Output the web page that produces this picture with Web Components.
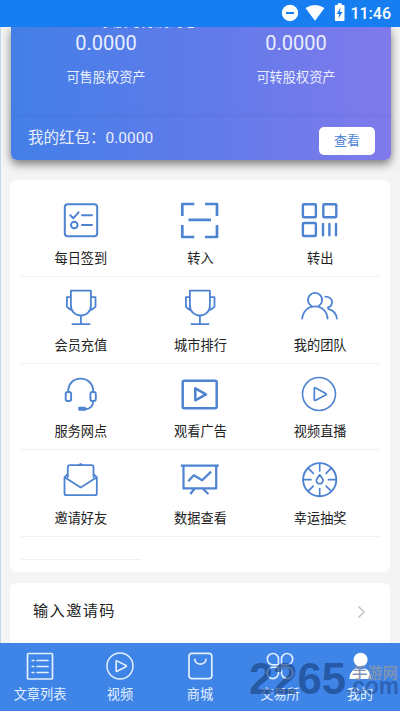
<!DOCTYPE html>
<html lang="zh-CN">
<head>
<meta charset="utf-8">
<title>我的</title>
<style>
html,body{margin:0;height:100%}
body{font-family:Roboto,"Noto Sans CJK SC",sans-serif;background:#f4f4f5;overflow:hidden}
</style>
</head>
<body>
<app-screen></app-screen>
<script>
const define = (name, html, setup) => customElements.define(name, class extends HTMLElement {
  connectedCallback() {
    if (this.shadowRoot) return;
    const t = document.createElement('template');
    t.innerHTML = html;
    const content = t.content.cloneNode(true);
    if (setup) setup(this, content);
    this.attachShadow({mode: 'open'}).append(content);
  }
});

const ICONS = {
  check: '<g stroke-width="2"><rect x="3.8" y="4.2" width="32.4" height="32" rx="3"/><path d="M9.3 15.2l3.1 3 5.2-5.8M21 15.2h10M21 25h10"/><circle cx="13.3" cy="25" r="3.3"/></g>',
  scan: '<path stroke-width="2.7" stroke-linecap="butt" d="M2.3 16V4h12M25 4h12v12M37 25v12H25M14.3 37h-12V25M8.5 19.9h22.5"/>',
  qr: '<g stroke-width="2.4"><rect x="2.9" y="4.3" width="13" height="13" rx="1"/><rect x="23.3" y="4.3" width="13" height="13" rx="1"/><rect x="2.9" y="23" width="13" height="13" rx="1"/><path d="M23 24v11.3M29.4 24v11.3M36 24v11.3"/></g>',
  cup: '<path stroke-width="1.8" d="M9.9 3.7h20v14.8c0 5.8-4.2 10-10 10s-10-4.2-10-10zM19.9 28.5v8.7M11.5 37.2h17M9.5 10.2H5.9v9.5l3.6 3M30.3 10.2h4.2v9.5l-4 3"/>',
  team: '<path stroke-width="1.8" d="M11.3 19.1A7.1 7.1 0 1 1 18.8 19.1M2.2 31.6c.6-7 5.8-12.2 12.7-12.2s12.3 5.2 12.7 12.2M25.3 9.7c4 0 6.7 2.4 6.7 5.6 0 2.6-1.6 4.5-4.2 5.3M28.3 21.8c5 1.3 8 5 8.6 9.8"/>',
  headset: '<g stroke-width="1.9"><path d="M7.3 18v-1.2c0-7.2 5.3-12.2 12.3-12.2s12.6 5 12.6 12.2V18M32.2 27c0 5-3.2 8.1-8 8.3"/><rect x="4.7" y="18" width="5.4" height="9" rx="2"/><rect x="29.4" y="18" width="5.4" height="9" rx="2"/></g><rect x="17.3" y="32.8" width="7.5" height="4" rx=".8" fill="currentColor" stroke="none"/>',
  ad: '<path stroke-width="2.5" d="M4.2 6.7h31a1.5 1.5 0 0 1 1.5 1.5v24.5a1.5 1.5 0 0 1-1.5 1.5h-31a1.5 1.5 0 0 1-1.5-1.5V8.2a1.5 1.5 0 0 1 1.5-1.5zM15.3 14.3v12l10.7-6z"/>',
  live: '<circle cx="19" cy="20" r="16.5" stroke-width="1.6"/><path stroke-width="1.7" d="M14.3 14.6v10.8q0 1.5 1.4.8l10-5.1q1.2-.9 0-1.7l-10-5.5q-1.4-.8-1.4.7z"/>',
  invite: '<g stroke-width="1.8"><path d="M6.8 17V7.2q0-2 2-2h21.7q2 0 2 2V17M17.8 5l1.9-1 1.9 1"/><path d="M6.5 14.5l-3 2.7v16.3q0 1.7 1.7 1.7h28.9q1.7 0 1.7-1.7V17.2l-3-2.7M3.5 17.2l16.2 10.2 16.1-10.2"/></g>',
  chart: '<path stroke-width="2.2" stroke-linecap="butt" d="M.8 5.7h38M3.5 5.7v22.7h32.7V5.7M8.2 21.3l5.6-6 8.4 5 8.9-8.7M14.3 29l-4 5M23.2 29l5.2 5"/>',
  wheel: '<circle cx="19.7" cy="19.7" r="16.6" stroke-width="1.9"/><path stroke-width="1.7" d="M19.7 4v7M19.7 28.5v7M4 19.7h7M28.5 19.7h7M8.7 8.7l4.6 4.6M30.7 8.7l-4.6 4.6M8.7 30.7l4.6-4.6M30.7 30.7l-4.6-4.6M19.7 14.8l-2.3 3.3a3.3 3.3 0 1 0 4.6 0z"/>',
  list: '<g stroke-width="1.7"><rect x="7.5" y="7.5" width="25" height="25.5" rx="1"/><path d="M12.3 14.5h1.5M17 14.5h11M12.3 20.5h1.5M17 20.5h11M12.3 26.5h1.5M17 26.5h11"/></g>',
  play: '<circle cx="20" cy="20" r="13" stroke-width="1.5"/><path stroke-width="1.6" d="M16.2 15.3v9.6q0 .8.8.4l9-4.6q.8-.6 0-1.2l-9-4.6q-.8-.4-.8.4z"/>',
  shop: '<path stroke-width="1.7" d="M12 7.3h16.8q3 0 3 3v19.5q0 2.8-3 2.8H12q-3 0-3-2.8V10.3q0-3 3-3zM14.8 13.3c.3 6.3 10.9 6.3 11.2 0"/>',
  clover: '<path stroke-width="1.6" d="M18.5 18.7h-5.8a5.6 5.6 0 1 1 5.8-5.6zM21.5 18.7h5.8a5.6 5.6 0 1 0-5.8-5.6zM18.5 21.2h-5.8a5.7 5.7 0 1 0 5.8 5.7zM21.5 21.2h5.8a5.7 5.7 0 1 1-5.8 5.7z"/>',
  me: '<g fill="currentColor" stroke="none"><circle cx="20.6" cy="13.7" r="7"/><path d="M9.3 33c.2-6.3 4.3-10.6 7.3-10.6q4 1.6 8 0c3 0 6.3 4.3 6.3 10.6z"/></g>'
};

define('ui-icon', `<style>:host{display:block;width:40px;height:40px;flex:none}svg{display:block;width:100%;height:100%;fill:none;stroke:currentColor;stroke-linecap:round;stroke-linejoin:round}</style><svg viewBox="0 0 40 40"></svg>`,
  (el, root) => { root.querySelector('svg').innerHTML = ICONS[el.getAttribute('name')]; });

define('status-bar', `<style>
:host{display:flex;height:26.5px;flex:none;align-items:center;justify-content:flex-end;background:#167ef0;color:#fff;box-sizing:border-box;padding-right:9px;position:relative;z-index:1}
svg{display:block;width:64px;height:22px}span{font-size:16px;line-height:26px;font-weight:500;padding:2px 0 0 5.5px}
</style><svg viewBox="0 0 64 22"><g fill="currentColor"><circle cx="9" cy="11" r="8.2"/><path d="M24.5 6q9.5-6 19 0L34 18.7z"/><path d="M54.7 3h2V1.2h4V3h2q.8 0 .8.8v14.4q0 .8-.8.8h-8q-.8 0-.8-.8V3.8q0-.8.8-.8z"/></g><path d="M5 11h8" stroke="#167ef0" stroke-width="2"/><path d="M59.7 5.5l-4 6.5h2.5l-.7 4.5 4-6.5H59z" fill="#167ef0"/></svg><span>11:46</span>`);

define('asset-value', `<style>
:host{display:block;width:190px;text-align:center;color:#e9eefd}
b{display:block;font-weight:400;font-size:20px;line-height:26px}p{margin:11.5px 0 0;font-size:13.2px;line-height:20px}
</style><b><slot></slot></b><p><slot name="label"></slot></p>`);

define('asset-card', `<style>
:host{display:block;height:133.5px;flex:none;margin:0 9px 0 11px;background:linear-gradient(90deg,#437fe7,#607bea 50%,#807aeb);border-radius:0 0 6px 6px;box-shadow:0 4px 10px rgba(0,0,0,.5);color:#e9eefd}
.cut{height:3.5px;display:flex;justify-content:center;align-items:flex-end;font-size:14px;line-height:18px;padding-right:105px}
.vals{display:flex;height:85.5px}
.foot{display:flex;height:44.5px;box-sizing:border-box;align-items:center;justify-content:space-between;padding:0 16px 0 17px;border-top:1px solid rgba(60,80,190,.12);box-shadow:0 -2px 4px rgba(50,70,170,.05)}
.foot span{font-size:15.5px;padding-bottom:4px}
button{width:56px;height:28px;margin-top:5px;border:0;padding:0;border-radius:5px;background:#fff;color:#4d83d6;font:13px/28px Roboto,"Noto Sans CJK SC",sans-serif}
</style><div class="cut">求股与分润的总</div><div class="vals"><asset-value>0.0000<span slot="label">可售股权资产</span></asset-value><asset-value>0.0000<span slot="label">可转股权资产</span></asset-value></div><div class="foot"><span>我的红包：0.0000</span><button>查看</button></div>`);

define('menu-item', `<style>
:host{display:flex;flex-direction:column;align-items:center;height:86.75px;box-sizing:border-box;padding-top:10px;border-bottom:1px solid #f1f1f1;font-size:13.2px;color:#222}
ui-icon{color:#4e83d2}span{line-height:20px;margin-top:8.8px;white-space:nowrap}
:host([blank]){height:23px}
</style><ui-icon></ui-icon><span><slot></slot></span>`, (el, root) => {
  if (el.hasAttribute('blank')) { root.querySelector('ui-icon').remove(); return; }
  root.querySelector('ui-icon').setAttribute('name', el.getAttribute('icon'));
});

define('menu-grid', `<style>
:host{display:grid;grid-template-columns:repeat(3,1fr);align-content:start;height:392px;flex:none;box-sizing:border-box;padding:10px 10px 0 11px;margin:20px 10px 0;background:#fff;border-radius:6px}
</style><slot></slot>`);

define('invite-row', `<style>
:host{display:flex;height:59.5px;flex:none;box-sizing:border-box;justify-content:space-between;align-items:center;margin:11px 10px 0;padding:0 24px 7px 23px;background:#fff;border-radius:6px 6px 0 0;font-size:15.2px;letter-spacing:1.4px;color:#222}
svg{width:9px;height:14px;margin-top:5px;fill:none;stroke:#c4c4c4;stroke-width:1.6}
</style><slot></slot><svg viewBox="0 0 9 14"><path d="M1.5 1.5L7 7l-5.5 5.5"/></svg>`);

define('tab-item', `<style>
:host{display:flex;flex-direction:column;align-items:center;width:80px;padding-top:3.5px;font-size:13.2px;color:#e3f0ff}
:host([active]) ui-icon{color:#fff}
span{line-height:20px;margin-top:-1px}
</style><ui-icon></ui-icon><span><slot></slot></span>`, (el, root) => root.querySelector('ui-icon').setAttribute('name', el.getAttribute('icon')));

define('tab-bar', `<style>
:host{display:flex;flex:1;background:#3f84e7;position:relative}
svg{position:absolute;left:245px;top:15px;width:155px;height:45px;pointer-events:none}
</style><slot></slot>
<svg viewBox="0 0 155 45"><g font-family="Liberation Sans,sans-serif" font-weight="bold" fill="#194384"><text x="4" y="36" font-size="45" fill-opacity=".66" textLength="97" lengthAdjust="spacingAndGlyphs">2265</text><text x="101" y="36" font-size="23" fill-opacity=".5" textLength="53" lengthAdjust="spacingAndGlyphs">.com</text></g><text x="107" y="19.5" font-family="Noto Sans CJK SC,sans-serif" font-weight="500" font-size="15.3" fill="#8494b0">手游网</text></svg>`);

define('app-screen', `<style>
:host{display:flex;flex-direction:column;height:711px;width:400px;box-sizing:border-box;background:linear-gradient(90deg,#c4d8e7 1px,#f4f4f5 1.5px)}
</style>
<status-bar></status-bar><asset-card></asset-card>
<menu-grid>
<menu-item icon="check">每日签到</menu-item><menu-item icon="scan">转入</menu-item><menu-item icon="qr">转出</menu-item>
<menu-item icon="cup">会员充值</menu-item><menu-item icon="cup">城市排行</menu-item><menu-item icon="team">我的团队</menu-item>
<menu-item icon="headset">服务网点</menu-item><menu-item icon="ad">观看广告</menu-item><menu-item icon="live">视频直播</menu-item>
<menu-item icon="invite">邀请好友</menu-item><menu-item icon="chart">数据查看</menu-item><menu-item icon="wheel">幸运抽奖</menu-item>
<menu-item blank></menu-item>
</menu-grid>
<invite-row>输入邀请码</invite-row>
<tab-bar><tab-item icon="list">文章列表</tab-item><tab-item icon="play">视频</tab-item><tab-item icon="shop">商城</tab-item><tab-item icon="clover">交易所</tab-item><tab-item icon="me" active>我的</tab-item></tab-bar>`);
</script>
</body>
</html>
